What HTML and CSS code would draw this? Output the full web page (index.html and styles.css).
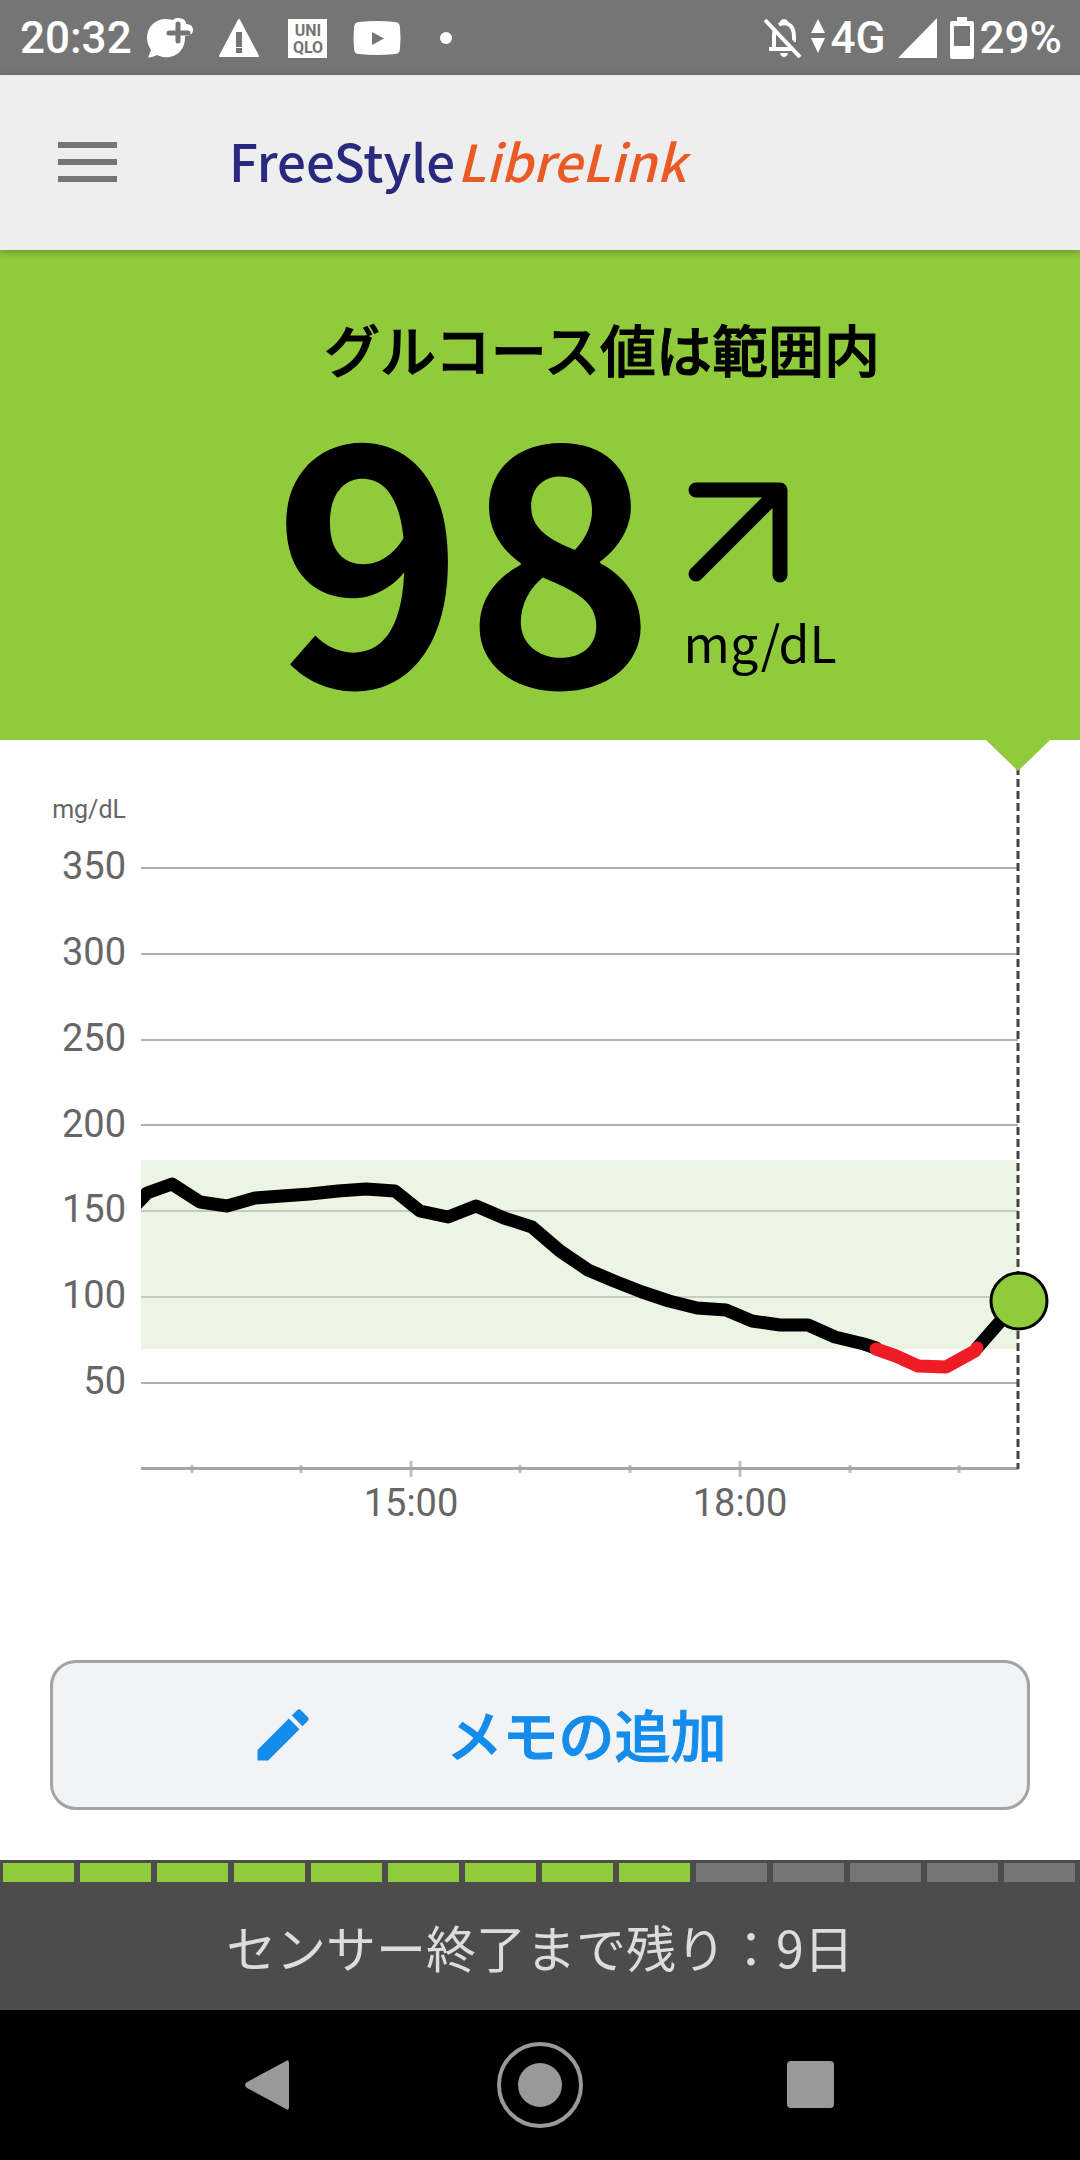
FILE: index.html
```html
<!DOCTYPE html>
<html lang="ja">
<head>
  <meta charset="UTF-8" />
  <title>FreeStyle LibreLink</title>
  <meta name="viewport" content="width=device-width, initial-scale=1" />
  <link rel="stylesheet" href="styles.css">
</head>
<body>

  <!-- STATUS BAR -->
  <div class="status-bar">
    <span class="status-time">20:32</span>
    <div class="status-icons">
      <svg viewBox="0 0 48 48">
        <path d="M31 4a6 6 0 0 0-4 2C12 2 1 11 1 24c0 5 2 9 4 12L2 43.500c4 0 6-1 9-2.500 15 7 29-3 28-19 4 0 8-2 8-6s-3-6-7-6c0-4-3-6-9-6z" fill="#fff"/>
        <path d="M32 10v17M23 19h19" stroke="#757575" stroke-width="5" stroke-linecap="round"/>
      </svg>
      <svg viewBox="0 0 48 48">
        <path d="M24 6l19 36H5z" fill="#fff" stroke="#fff" stroke-width="2" stroke-linejoin="round"/>
        <path d="M21 18h6v15h-6zM21 34h6v5h-6z" fill="#757575"/>
      </svg>
      <svg viewBox="0 0 48 48">
        <path d="M4 5h39v39H4z" fill="#fff"/>
        <text class="uniqlo" x="24" y="22">UNI</text>
        <text class="uniqlo" x="24" y="39">QLO</text>
      </svg>
      <svg viewBox="0 0 48 48">
        <path d="M6 8Q24 6 42 8q5 0 5 6 1 10 0 20 0 6-5 6-18 2-36 0-5 0-5-6-1-10 0-20 0-6 5-6z" fill="#fff"/>
        <path d="M19 18l12 6.500L19 31z" fill="#757575"/>
      </svg>
      <svg viewBox="0 0 48 48"><circle cx="24" cy="24" r="6" fill="#fff"/></svg>
    </div>
    <div class="status-right">
      <svg class="bell" viewBox="0 0 38 40">
        <path d="M10 30V17q0-4 2-6M15 7q4-3 9-1 6 3 6 13v5M5 31h23" fill="none" stroke="#fff" stroke-width="4"/>
        <path d="M16 3q4-4 8 0v4h-8zM16 35h8q-1 4-4 4t-4-4z" fill="#fff"/>
        <path d="M4 -1L39 36" stroke="#757575" stroke-width="4"/>
        <path d="M1 2l35 37" stroke="#fff" stroke-width="4"/>
      </svg>
      <svg class="arrows" viewBox="0 0 14 40"><path d="M7 1l7 14H0zM0 20h14L7 35z" fill="#fff"/></svg>
      <span class="network">4G</span>
      <svg class="signal" viewBox="0 0 39 40"><path d="M39 0v40H0z" fill="#fff"/></svg>
      <svg class="battery" viewBox="0 0 24 42">
        <path d="M7 0h10v4h5q2 0 2 2v34q0 2-2 2H2q-2 0-2-2V6q0-2 2-2h5zM4 9v20h16V9z" fill="#fff" fill-rule="evenodd"/>
      </svg>
      <span>29%</span>
    </div>
  </div>

  <!-- HEADER -->
  <header>
    <button class="menu-btn" type="button" aria-label="メニュー">
      <span></span><span></span><span></span>
    </button>
    <div class="logo"><span class="logo-free">FreeStyle</span><span class="logo-libre">LibreLink</span></div>
  </header>

  <!-- CURRENT READING -->
  <section class="reading">
    <h1>グルコース値は範囲内</h1>
    <div class="reading-row">
      <span class="value">98</span>
      <div class="trend">
        <svg viewBox="0 0 100 101">
          <path d="M8 8h84v85M92 8L8 92" fill="none" stroke="#000" stroke-width="15" stroke-linecap="round" stroke-linejoin="round"/>
        </svg>
        <span class="unit">mg/dL</span>
      </div>
    </div>
  </section>

  <!-- GLUCOSE CHART -->
  <svg class="chart" viewBox="0 740 1080 800">
    <path class="grid" d="M141 868H1018M141 954H1018M141 1040H1018M141 1125H1018M141 1211H1018M141 1297H1018M141 1383H1018"/>
    <rect class="range" x="141" y="1160" width="877" height="189"/>

    <g class="y-labels">
      <text class="small" x="126" y="818">mg/dL</text>
      <text x="126" y="879">350</text>
      <text x="126" y="965">300</text>
      <text x="126" y="1051">250</text>
      <text x="126" y="1137">200</text>
      <text x="126" y="1222">150</text>
      <text x="126" y="1308">100</text>
      <text x="126" y="1394">50</text>
    </g>

    <path class="tick" d="M192 1465v8M301 1465v8M411 1461v16M520 1465v8M630 1465v8M740 1461v16M850 1465v8M959 1465v8"/>
    <path class="axis" d="M141 1468.500H1018"/>
    <g class="x-labels">
      <text x="411" y="1516">15:00</text>
      <text x="740" y="1516">18:00</text>
    </g>

    <path class="now-line" d="M1018 767V1469"/>
    <path class="pointer" d="M986 740h64l-32 31z"/>

    <clipPath id="plot"><rect x="141" y="800" width="900" height="680"/></clipPath>
    <g clip-path="url(#plot)">
      <polyline class="line" points="135,1206 147,1193 172,1184 200,1202 227,1206 255,1198 282,1196 310,1194 338,1191 366,1189 395,1191 420,1211 448,1217 476,1206 504,1218 532,1227 560,1251 588,1270 614,1281 642,1292 669,1301 697,1308 726,1310 752,1321 780,1325 808,1325 835,1337 864,1344 876,1348"/>
      <polyline class="line" points="977,1348 1018,1301"/>
      <polyline class="line low" points="876,1349 896,1356 918,1366 946,1367 975,1351 977,1348"/>
    </g>
    <circle class="current" cx="1019" cy="1301" r="28"/>
  </svg>

  <!-- ADD NOTE -->
  <button class="note-btn" type="button">
    <svg viewBox="0 0 24 24">
      <path d="M3 17.250V21h3.750L17.810 9.940l-3.750-3.750L3 17.250zM20.710 7.040a1 1 0 0 0 0-1.410l-2.340-2.340a1 1 0 0 0-1.410 0l-1.830 1.830 3.750 3.750 1.830-1.830z" fill="#148ceb"/>
    </svg>
    <span>メモの追加</span>
  </button>

  <!-- SENSOR LIFE -->
  <footer>
    <div class="days">
      <span class="left"></span><span class="left"></span><span class="left"></span>
      <span class="left"></span><span class="left"></span><span class="left"></span>
      <span class="left"></span><span class="left"></span><span class="left"></span>
      <span></span><span></span><span></span><span></span><span></span>
    </div>
    <p>センサー終了まで残り：9日</p>
  </footer>

  <!-- SYSTEM NAVIGATION -->
  <nav>
    <button type="button" aria-label="戻る">
      <svg viewBox="0 0 90 90"><path d="M22 42L61 21q3-2 3 2v44q0 4-3 2L22 48q-4-3 0-6z" fill="#999"/></svg>
    </button>
    <button type="button" aria-label="ホーム">
      <svg viewBox="0 0 90 90">
        <circle cx="45" cy="45" r="41" fill="none" stroke="#999" stroke-width="4"/>
        <circle cx="45" cy="45" r="22" fill="#999"/>
      </svg>
    </button>
    <button type="button" aria-label="履歴">
      <svg viewBox="0 0 90 90"><rect x="22" y="21" width="47" height="47" rx="4" fill="#999"/></svg>
    </button>
  </nav>

</body>
</html>
```
FILE: styles.css
```css
* {
  box-sizing: border-box;
}

body {
  margin: 0;
  min-height: 100vh;
  display: flex;
  flex-direction: column;
  background-color: #fff;
  color: #000;
  font-family: "Noto Sans CJK JP", sans-serif;
}

svg {
  display: block;
}

button {
  border: none;
  background: none;
  padding: 0;
  font-family: inherit;
  cursor: pointer;
}

/* STATUS BAR */
.status-bar {
  height: 75px;
  padding: 0 18px 0 20px;
  display: flex;
  align-items: center;
  background-color: #757575;
  color: #fff;
  font-family: Roboto, sans-serif;
  font-size: 44px;
  font-weight: 500;
}

.status-icons {
  display: flex;
  gap: 21px;
  margin-left: 14px;
}

.status-icons svg {
  width: 48px;
  height: 48px;
}

.uniqlo {
  font-size: 16px;
  font-weight: bold;
  text-anchor: middle;
  fill: #757575;
}

.status-right {
  display: flex;
  align-items: center;
  margin-left: auto;
}

.bell {
  width: 38px;
  height: 40px;
  margin-right: 9px;
}

.arrows {
  width: 14px;
  height: 40px;
  margin-right: 6px;
}

.network {
  margin-right: 12px;
}

.signal {
  width: 39px;
  height: 40px;
  margin-right: 13px;
}

.battery {
  width: 24px;
  height: 42px;
  margin-right: 6px;
}

/* HEADER */
header {
  height: 175px;
  padding: 0 58px 2px;
  display: flex;
  align-items: center;
  gap: 112px;
  background-color: #eee;
  box-shadow: 0 2px 8px rgba(0, 0, 0, 0.3);
  z-index: 1;
}

.menu-btn {
  width: 59px;
  display: flex;
  flex-direction: column;
  gap: 11px;
}

.menu-btn span {
  height: 6px;
  background-color: #757575;
}

.logo {
  display: flex;
  gap: 2px;
  padding-bottom: 4px;
  font-size: 51px;
  font-weight: 500;
  line-height: 80px;
}

.logo-free {
  color: #29297f;
}

.logo-libre {
  color: #e95a24;
  font-style: italic;
}

/* CURRENT READING */
.reading {
  height: 490px;
  background-color: #90cb3b;
}

.reading h1 {
  margin: 0;
  padding: 58px 0 0 124px;
  font-size: 56px;
  font-weight: 500;
  line-height: 80px;
  text-align: center;
  -webkit-text-stroke: 1px #000;
}

.reading-row {
  display: flex;
  justify-content: center;
  gap: 28px;
  padding: 18px 0 0 30px;
}

.value {
  font-size: 324px;
  font-weight: 700;
  line-height: 280px;
}

.trend {
  padding-top: 76px;
}

.trend svg {
  width: 100px;
  height: 101px;
  margin-left: 4px;
}

.unit {
  display: block;
  font-size: 50px;
  line-height: 60px;
  margin-top: 28px;
}

/* GLUCOSE CHART */
.chart {
  width: 100%;
  font-family: Roboto, sans-serif;
  font-size: 38px;
}

.grid {
  stroke: #b0b0b0;
  stroke-width: 2;
}

.range {
  fill: #d9ebc8;
  fill-opacity: 0.5;
}

.y-labels {
  fill: #666;
  text-anchor: end;
}

.x-labels {
  fill: #666;
  text-anchor: middle;
}

.small {
  font-size: 25px;
}

.tick {
  stroke: #c0c0c0;
  stroke-width: 3;
}

.axis {
  stroke: #a6a6a6;
  stroke-width: 3;
}

.now-line {
  stroke: #444;
  stroke-width: 3;
  stroke-dasharray: 8 4;
}

.pointer {
  fill: #90cb3b;
}

.line {
  fill: none;
  stroke: #000;
  stroke-width: 13;
  stroke-linecap: round;
  stroke-linejoin: round;
}

.line.low {
  stroke: #ee1c25;
}

.current {
  fill: #90cb3b;
  stroke: #000;
  stroke-width: 3;
}

/* ADD NOTE */
.note-btn {
  height: 150px;
  margin: 120px 50px 50px;
  display: flex;
  align-items: center;
  justify-content: center;
  gap: 130px;
  padding-right: 105px;
  background-color: #f2f3f5;
  border: 3px solid #a3a3a3;
  border-radius: 26px;
  color: #148ceb;
  font-size: 56px;
  font-weight: 500;
  -webkit-text-stroke: 1px #148ceb;
}

.note-btn svg {
  width: 68px;
  height: 68px;
}

.note-btn span {
  padding-bottom: 6px;
}

/* SENSOR LIFE */
footer {
  height: 150px;
  background-color: #4c4c4c;
  color: #dcdcdc;
  text-align: center;
}

.days {
  display: flex;
  gap: 6px;
  padding: 3px 5px 0 3px;
}

.days span {
  flex: 1;
  height: 19px;
  background-color: #757575;
}

.days .left {
  background-color: #90cb3b;
}

footer p {
  margin: 0;
  padding-top: 24px;
  font-size: 50px;
  line-height: 80px;
}

/* SYSTEM NAVIGATION */
nav {
  flex: 1;
  min-height: 150px;
  padding: 0 135px;
  display: flex;
  align-items: center;
  justify-content: space-around;
  background-color: #000;
}

nav svg {
  width: 90px;
  height: 90px;
}
```
